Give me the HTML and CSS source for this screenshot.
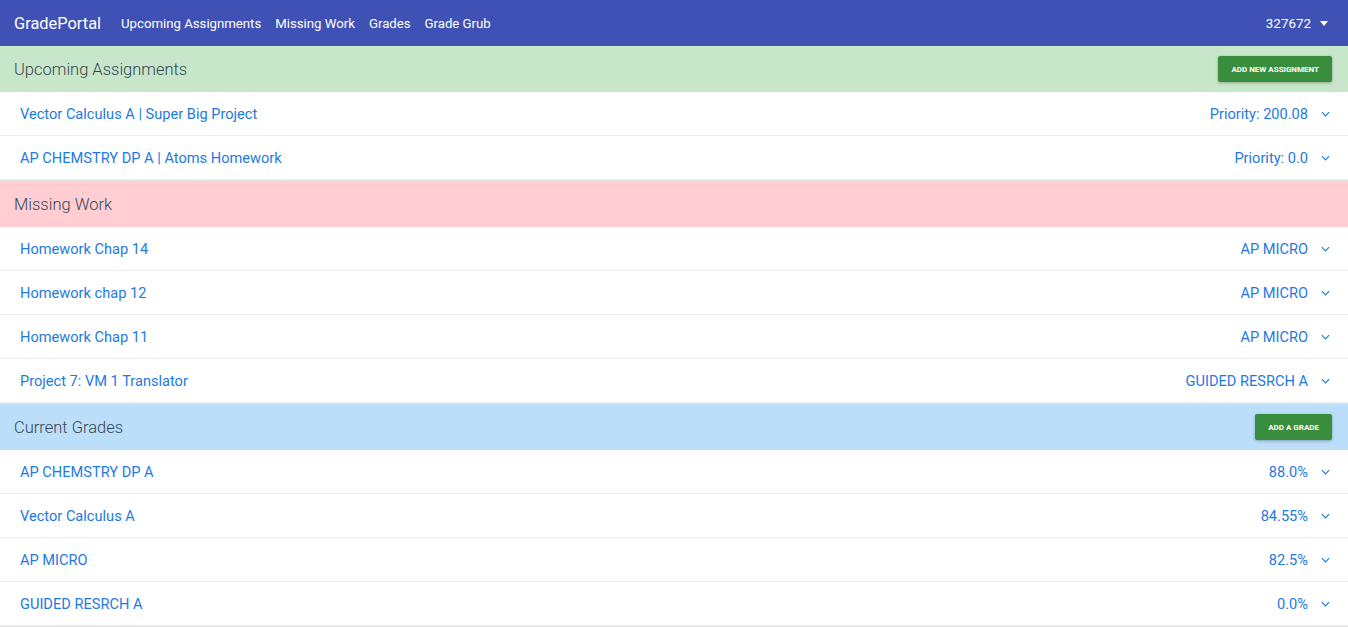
FILE: index.html
```html
<!DOCTYPE html>
<html>
<head>
<meta charset="utf-8">
<link rel="stylesheet" href="styles.css">
</head>
<body>
<nav class="navbar">
  <span class="brand">GradePortal</span>
  <a class="nav-link">Upcoming Assignments</a>
  <a class="nav-link">Missing Work</a>
  <a class="nav-link">Grades</a>
  <a class="nav-link">Grade Grub</a>
  <span class="spacer"></span>
  <span class="user">327672 <span class="caret"></span></span>
</nav>

<section class="section">
  <header class="sec-head green">
    <span class="sec-title">Upcoming Assignments</span>
    <button class="btn">ADD NEW ASSIGNMENT</button>
  </header>
  <ul class="panel">
    <li class="row"><span>Vector Calculus A | Super Big Project</span><span class="right">Priority: 200.08</span><svg class="chev" viewBox="0 0 10 6"><path d="M1 1l4 4 4-4" /></svg></li>
    <li class="row"><span>AP CHEMSTRY DP A | Atoms Homework</span><span class="right">Priority: 0.0</span><svg class="chev" viewBox="0 0 10 6"><path d="M1 1l4 4 4-4" /></svg></li>
  </ul>
</section>

<section class="section">
  <header class="sec-head red">
    <span class="sec-title">Missing Work</span>
  </header>
  <ul class="panel">
    <li class="row"><span>Homework Chap 14</span><span class="right">AP MICRO</span><svg class="chev" viewBox="0 0 10 6"><path d="M1 1l4 4 4-4" /></svg></li>
    <li class="row"><span>Homework chap 12</span><span class="right">AP MICRO</span><svg class="chev" viewBox="0 0 10 6"><path d="M1 1l4 4 4-4" /></svg></li>
    <li class="row"><span>Homework Chap 11</span><span class="right">AP MICRO</span><svg class="chev" viewBox="0 0 10 6"><path d="M1 1l4 4 4-4" /></svg></li>
    <li class="row"><span>Project 7: VM 1 Translator</span><span class="right">GUIDED RESRCH A</span><svg class="chev" viewBox="0 0 10 6"><path d="M1 1l4 4 4-4" /></svg></li>
  </ul>
</section>

<section class="section">
  <header class="sec-head blue">
    <span class="sec-title">Current Grades</span>
    <button class="btn">ADD A GRADE</button>
  </header>
  <ul class="panel">
    <li class="row"><span>AP CHEMSTRY DP A</span><span class="right">88.0%</span><svg class="chev" viewBox="0 0 10 6"><path d="M1 1l4 4 4-4" /></svg></li>
    <li class="row"><span>Vector Calculus A</span><span class="right">84.55%</span><svg class="chev" viewBox="0 0 10 6"><path d="M1 1l4 4 4-4" /></svg></li>
    <li class="row"><span>AP MICRO</span><span class="right">82.5%</span><svg class="chev" viewBox="0 0 10 6"><path d="M1 1l4 4 4-4" /></svg></li>
    <li class="row"><span>GUIDED RESRCH A</span><span class="right">0.0%</span><svg class="chev" viewBox="0 0 10 6"><path d="M1 1l4 4 4-4" /></svg></li>
  </ul>
</section>
</body>
</html>
```
FILE: styles.css
```css
* { box-sizing: border-box; }
html, body { margin: 0; padding: 0; background: #fff; }
body { font-family: Roboto, "Liberation Sans", Arial, sans-serif; }

.navbar {
  height: 46px;
  background: #3f51b5;
  display: flex;
  align-items: center;
  padding: 0 20px 0 14px;
  color: #fff;
}
.brand { font-size: 16.4px; margin-right: 20px; font-weight: 400; }
.nav-link { font-size: 13.2px; margin-right: 14px; color: #fff; }
.spacer { flex: 1; }
.user { font-size: 13.4px; display: flex; align-items: center; }
.caret {
  display: inline-block;
  width: 0; height: 0;
  border-left: 4px solid transparent;
  border-right: 4px solid transparent;
  border-top: 5px solid #fff;
  margin-left: 9px;
}

.section { margin: 0; }
.sec-head {
  height: 46px;
  display: flex;
  align-items: center;
  justify-content: space-between;
  padding: 0 16px 0 14px;
}
.green { background: #c8e6c9; }
.red { background: #ffcdd2; }
.blue { background: #bbdefb; }
.sec-title { font-size: 16.5px; font-weight: 300; color: #37474f; }

.btn {
  height: 26px;
  background: #388e3c;
  color: #fff;
  border: none;
  border-radius: 2px;
  font-family: inherit;
  font-size: 8px;
  font-weight: 700;
  padding: 0 13px;
  box-shadow: 0 1px 3px rgba(0,0,0,0.3);
}

.panel {
  list-style: none;
  margin: 0;
  padding: 0;
  border-bottom: 1px solid #e4e4e4;
}
.row {
  height: 44px;
  display: flex;
  align-items: center;
  padding: 0 18px 0 20px;
  border-bottom: 1px solid #ececec;
  font-size: 14.6px;
  color: #1e7ae0;
}
.row .right { margin-left: auto; }
.chev {
  width: 9px; height: 6px;
  margin-left: 13px;
  fill: none;
  stroke: #1e7ae0;
  stroke-width: 1.3;
}
```
